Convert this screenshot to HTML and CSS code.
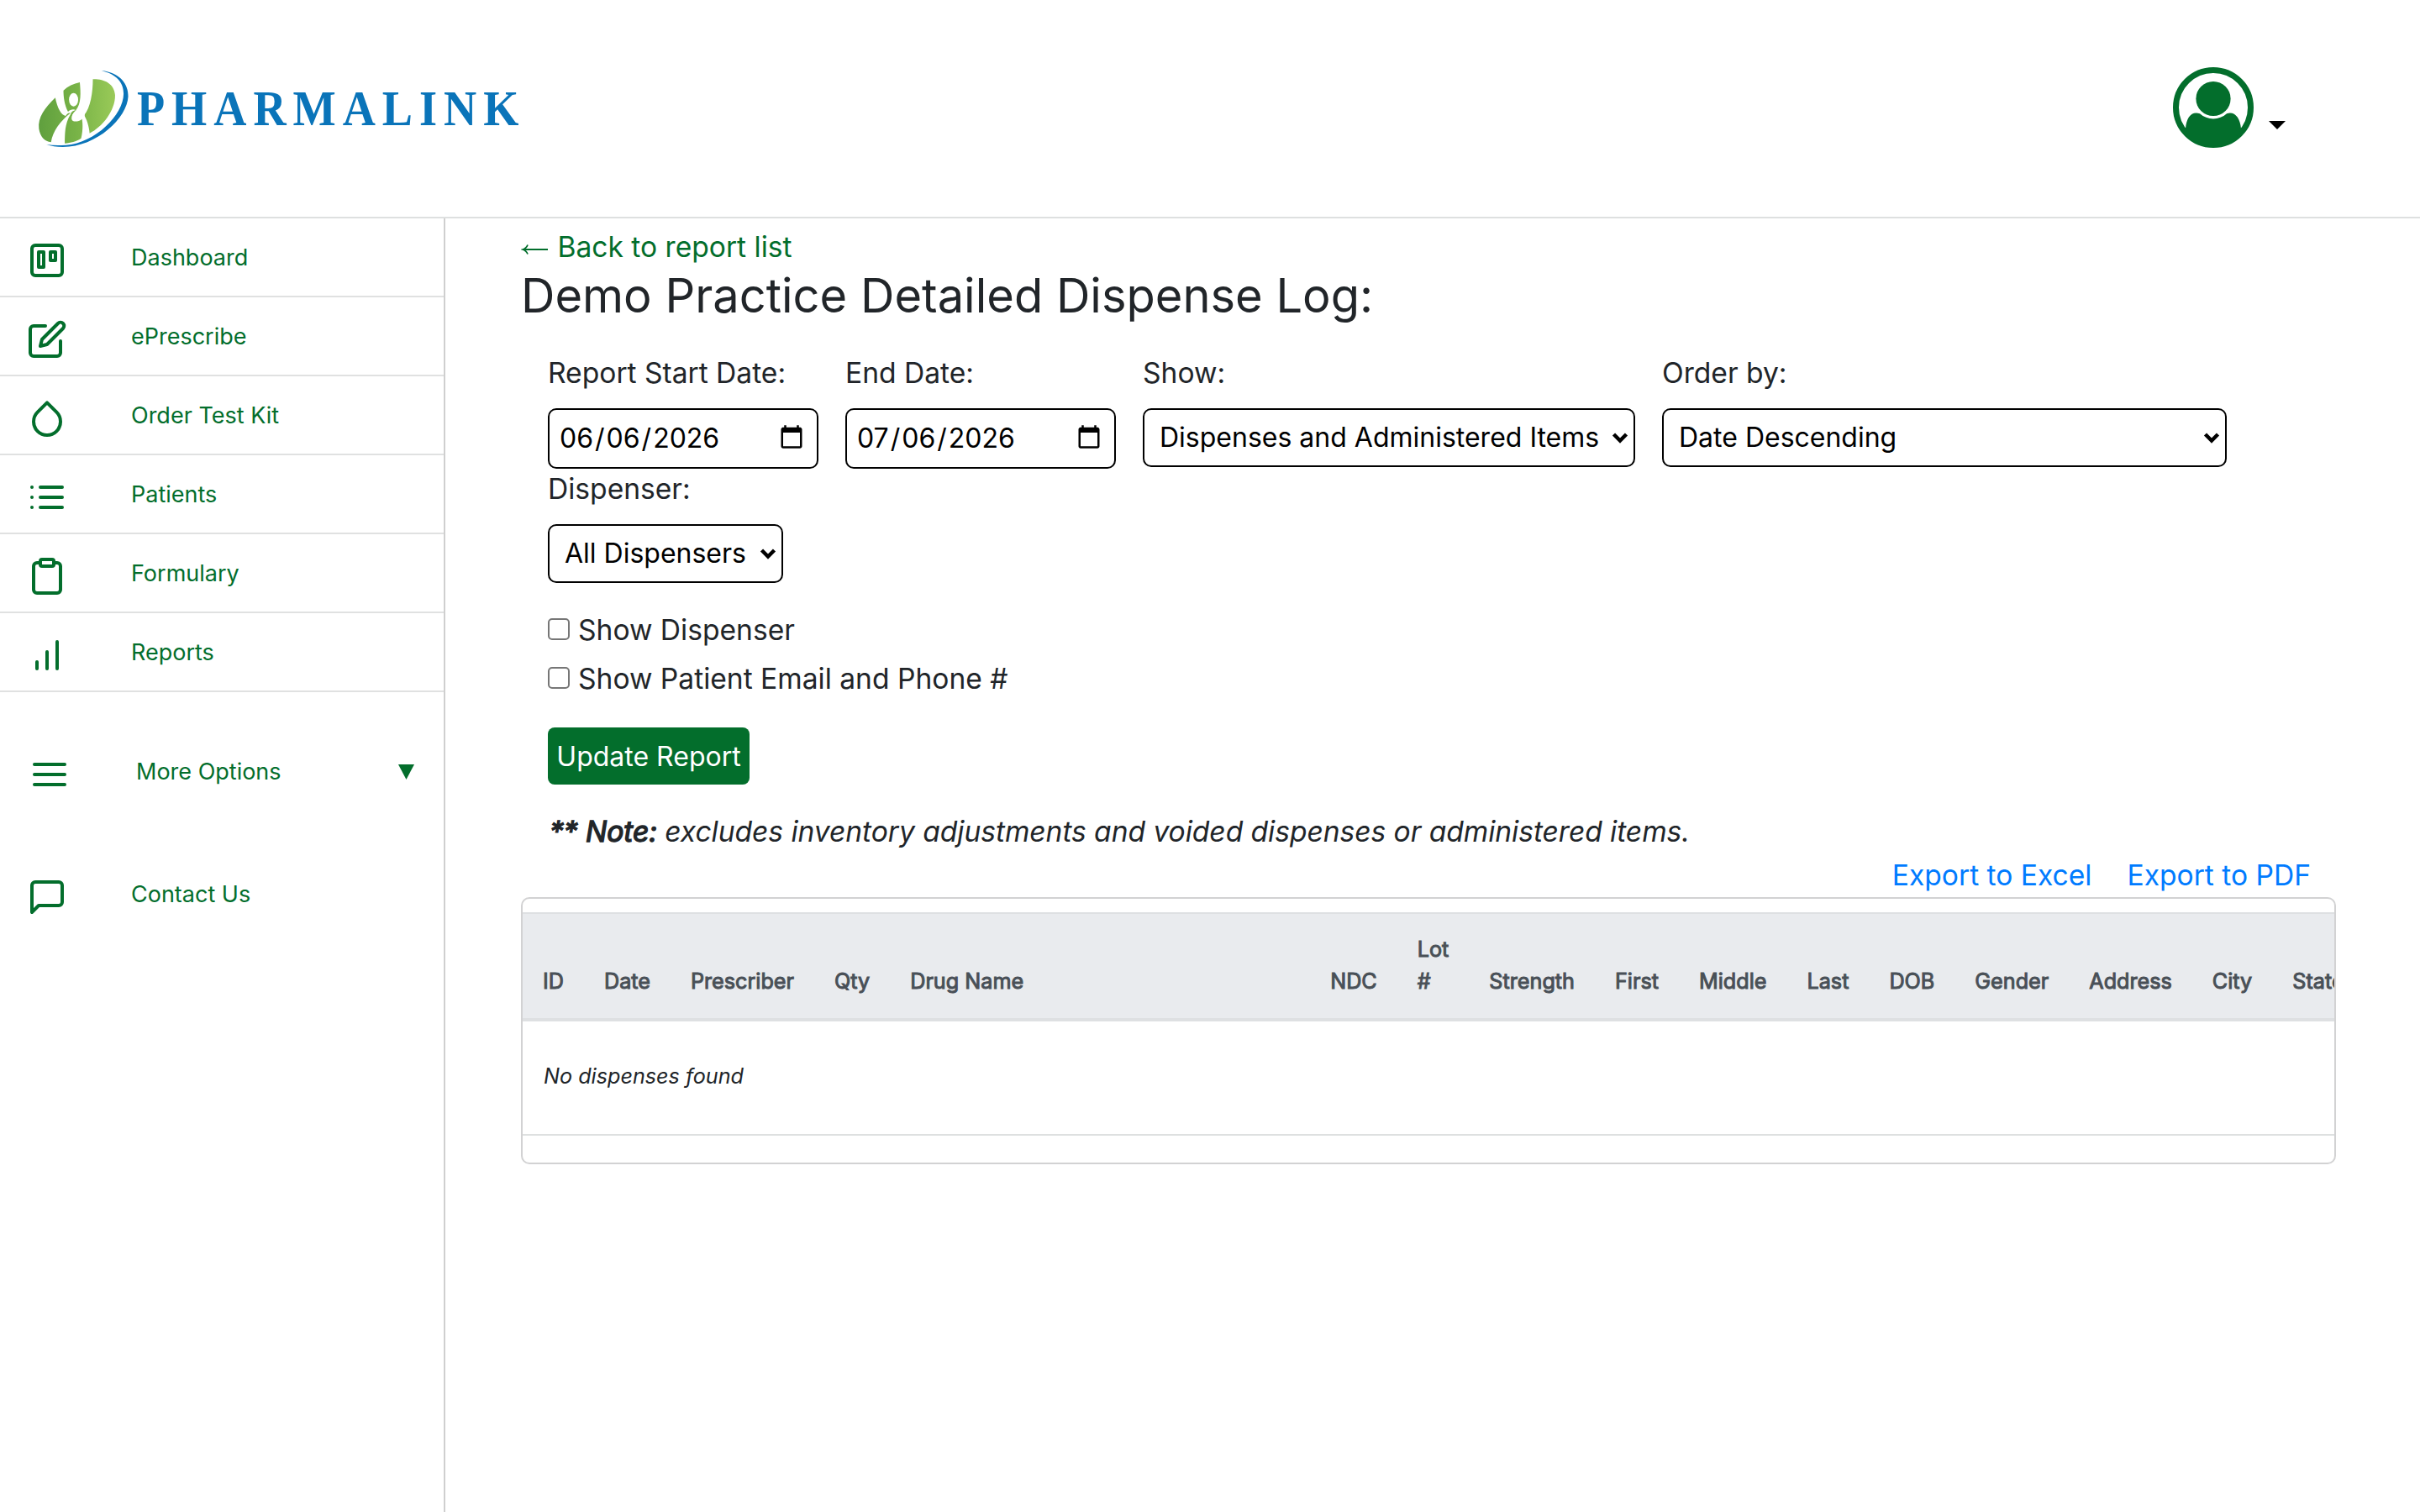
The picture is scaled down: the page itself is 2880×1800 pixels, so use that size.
FILE: index.html
```
<!DOCTYPE html>
<html lang="en-US">
<head>
  <meta charset="UTF-8">
  <title>Detailed Dispense Log</title>
  <link rel="stylesheet" href="styles.css">
</head>
<body>
  <header class="topbar">
    <svg class="logo" viewBox="0 0 610 140" width="610" height="140">
      <defs>
        <linearGradient id="leaf" x1="40" y1="0" x2="275" y2="0" gradientUnits="userSpaceOnUse">
          <stop offset="0" stop-color="#5f9f3e"/>
          <stop offset="0.5" stop-color="#78b347"/>
          <stop offset="1" stop-color="#9aca58"/>
        </linearGradient>
      </defs>
      <g transform="scale(0.389 0.3333)" fill="url(#leaf)">
        <path d="M92 169C60 205 38 240 42 280C46 310 60 325 79 328C84 288 108 252 138 224C132 222 128 226 124 234C110 232 98 205 92 169Z"/>
        <path d="M117 143C130 128 148 119 167 114C170 150 172 190 155 214C147 208 138 212 131 219C120 195 117 165 117 143Z"/>
        <path d="M207 103C242 102 272 118 275 160C276 215 235 275 197 296C195 270 188 245 180 232C200 205 207 150 207 103Z"/>
        <path d="M121 332C122 300 120 262 139 228C140 220 148 214 157 213C146 224 140 236 146 240C152 246 164 232 172 236C176 250 178 284 171 314C155 326 140 330 121 332Z"/>
        <ellipse cx="148" cy="176" rx="14" ry="24" fill="#fff"/>
        <path fill="#fff" d="M146 252C138 245 142 226 158 212C150 228 150 238 158 234C166 228 168 206 169 190L182 190L182 236C174 248 158 258 146 252Z"/>
        <path fill="#0a74b9" d="M233 72C290 80 316 120 315 165C312 240 220 345 115 345C95 345 80 342 65 336C85 340 105 340 125 338C215 330 300 230 301 155C301 115 280 85 233 72Z"/>
      </g>
      <text class="logo-text" transform="translate(133 89) scale(0.920 1)" textLength="494" lengthAdjust="spacing">PHARMALINK</text>
    </svg>
    <div class="account">
      <svg width="96" height="96" viewBox="0 0 96 96">
        <circle cx="48" cy="48" r="44.5" fill="none" stroke="#036e2c" stroke-width="7"/>
        <circle cx="48" cy="37.5" r="20.6" fill="#036e2c"/>
        <path fill="#036e2c" d="M15 73C16 60 22 52 32 55.3C41 63.5 55 63.5 64 55.3C73 52 80 60 81 73C76 86 64 94 48 94C32 94 20 86 15 73Z"/>
      </svg>
      <svg class="caret" width="20" height="10" viewBox="0 0 20 10"><path d="M0 0H20L10 10Z"/></svg>
    </div>
  </header>

  <div class="page">
    <nav class="sidebar">
      <a class="item" href="#">
        <svg class="icon" viewBox="0 0 24 24"><rect x="3" y="3" width="18" height="18" rx="2"/><rect x="7" y="7" width="3" height="9"/><rect x="14" y="7" width="3" height="5"/></svg>
        <span>Dashboard</span>
      </a>
      <a class="item" href="#">
        <svg class="icon" viewBox="0 0 24 24"><path d="M11 4H4a2 2 0 0 0-2 2v14a2 2 0 0 0 2 2h14a2 2 0 0 0 2-2v-7"/><path d="M18.500 2.500a2.121 2.121 0 0 1 3 3L12 15l-4 1 1-4 9.500-9.500z"/></svg>
        <span>ePrescribe</span>
      </a>
      <a class="item" href="#">
        <svg class="icon" viewBox="0 0 24 24"><path d="M12 2.690l5.660 5.660a8 8 0 1 1-11.310 0z"/></svg>
        <span>Order Test Kit</span>
      </a>
      <a class="item" href="#">
        <svg class="icon" viewBox="0 0 24 24"><path d="M8 6h13M8 12h13M8 18h13M3 6h.01M3 12h.01M3 18h.01"/></svg>
        <span>Patients</span>
      </a>
      <a class="item" href="#">
        <svg class="icon" viewBox="0 0 24 24"><path d="M16 4h2a2 2 0 0 1 2 2v14a2 2 0 0 1-2 2H6a2 2 0 0 1-2-2V6a2 2 0 0 1 2-2h2"/><rect x="8" y="2" width="8" height="4" rx="1"/></svg>
        <span>Formulary</span>
      </a>
      <a class="item" href="#">
        <svg class="icon" viewBox="0 0 24 24"><path d="M12 20V10M18 20V4M6 20v-4"/></svg>
        <span>Reports</span>
      </a>
      <a class="item more" href="#">
        <svg class="icon" viewBox="0 0 24 24"><path d="M3 12h18M3 6h18M3 18h18"/></svg>
        <span>More Options</span>
        <svg class="arrow" width="19" height="18" viewBox="0 0 19 18"><path d="M0 0H19L9.500 18Z"/></svg>
      </a>
      <a class="item contact" href="#">
        <svg class="icon" viewBox="0 0 24 24"><path d="M21 15a2 2 0 0 1-2 2H7l-4 4V5a2 2 0 0 1 2-2h14a2 2 0 0 1 2 2z"/></svg>
        <span>Contact Us</span>
      </a>
    </nav>

    <main class="content">
      <a class="back" href="#"><svg class="back-arrow" width="34" height="14" viewBox="0 0 34 14"><path d="M2 7H32M8 1.500Q6.500 5.500 2 7Q6.500 8.500 8 12.500"/></svg> Back to report list</a>
      <h1>Demo Practice Detailed Dispense Log:</h1>

      <form class="filters">
        <div class="field date">
          <label for="start">Report Start Date:</label>
          <input id="start" type="date" value="2026-06-06">
        </div>
        <div class="field date">
          <label for="end">End Date:</label>
          <input id="end" type="date" value="2026-07-06">
        </div>
        <div class="field show">
          <label for="show">Show:</label>
          <div class="select">
            <select id="show"><option>Dispenses and Administered Items</option></select>
            <svg class="chevron" width="20" height="14" viewBox="0 0 20 14"><path d="M2.500 3L10 10.500L17.500 3"/></svg>
          </div>
        </div>
        <div class="field order">
          <label for="order">Order by:</label>
          <div class="select">
            <select id="order"><option>Date Descending</option></select>
            <svg class="chevron" width="20" height="14" viewBox="0 0 20 14"><path d="M2.500 3L10 10.500L17.500 3"/></svg>
          </div>
        </div>
        <div class="field dispenser">
          <label for="dispenser">Dispenser:</label>
          <div class="select">
            <select id="dispenser"><option>All Dispensers</option></select>
            <svg class="chevron" width="20" height="14" viewBox="0 0 20 14"><path d="M2.500 3L10 10.500L17.500 3"/></svg>
          </div>
        </div>
      </form>

      <div class="checks">
        <label><input type="checkbox"><span>Show Dispenser</span></label>
        <label><input type="checkbox"><span>Show Patient Email and Phone #</span></label>
      </div>

      <button class="update" type="button">Update Report</button>

      <p class="note"><b>** Note:</b> excludes inventory adjustments and voided dispenses or administered items.</p>

      <div class="exports">
        <a href="#">Export to Excel</a>
        <a href="#">Export to PDF</a>
      </div>

      <div class="table-box">
        <table>
          <thead>
            <tr>
              <th>ID</th>
              <th>Date</th>
              <th>Prescriber</th>
              <th>Qty</th>
              <th class="drug">Drug Name</th>
              <th>NDC</th>
              <th>Lot<br>#</th>
              <th>Strength</th>
              <th>First</th>
              <th>Middle</th>
              <th>Last</th>
              <th>DOB</th>
              <th>Gender</th>
              <th>Address</th>
              <th>City</th>
              <th>State</th>
            </tr>
          </thead>
          <tbody>
            <tr>
              <td colspan="16">No dispenses found</td>
            </tr>
          </tbody>
        </table>
      </div>
    </main>
  </div>
</body>
</html>
```
FILE: styles.css
```
* {
  box-sizing: border-box;
}

body {
  margin: 0;
  font-family: Inter, sans-serif;
  font-size: 33.6px;
  line-height: 1.5;
  color: #212529;
  background: #fff;
}

a {
  text-decoration: none;
}

.topbar {
  display: flex;
  justify-content: space-between;
  align-items: flex-start;
  height: 260px;
  padding: 60px 160px 0 30px;
  border-bottom: 2px solid #dee0e0;
}

.logo-text {
  font-family: "Liberation Serif", serif;
  font-size: 59px;
  font-weight: bold;
  fill: #0a74b9;
}

.account {
  display: flex;
  align-items: flex-end;
  gap: 18px;
  padding-top: 20px;
}

.caret {
  margin-bottom: 22px;
}

.page {
  display: flex;
  height: 1540px;
}

/* Sidebar */
.sidebar {
  width: 530px;
  border-right: 2px solid #cfcfcf;
}

.item {
  display: flex;
  align-items: flex-start;
  gap: 76px;
  height: 94px;
  padding: 26px 32px 0;
  border-bottom: 2px solid #e0e1e1;
  color: #036e2c;
  font-size: 27px;
}

.item span {
  padding-top: 1px;
}

.icon {
  width: 48px;
  height: 48px;
  fill: none;
  stroke: #036e2c;
  stroke-width: 2;
  stroke-linecap: round;
  stroke-linejoin: round;
}

.more {
  gap: 79px;
  margin-top: 48px;
  padding: 26px 35px 0;
  border: none;
}

.more .arrow {
  margin: 12px 0 0 auto;
  fill: #036e2c;
}

.contact {
  margin-top: 52px;
  border: none;
}

/* Report */
.content {
  width: 2160px;
  margin-left: 90px;
  padding-top: 9px;
}

.back {
  display: block;
  height: 50px;
  color: #036e2c;
}

.back-arrow {
  fill: none;
  stroke: #036e2c;
  stroke-width: 1.8;
  vertical-align: 2px;
}

h1 {
  margin: 0;
  font-size: 56px;
  font-weight: 400;
  line-height: 67px;
}

.filters {
  display: flex;
  flex-wrap: wrap;
  column-gap: 32px;
  padding: 32px 32px 0;
}

.field {
  height: 138px;
}

.field label {
  display: block;
  height: 68px;
  padding-top: 1px;
}

.date {
  width: 322px;
}

.show {
  width: 586px;
}

.order {
  width: 672px;
}

.dispenser {
  width: 280px;
}

.field input,
.field select {
  width: 100%;
  height: 70px;
  border: 2px solid #000;
  border-radius: 10px;
  background: #fff;
  color: #000;
  font-family: inherit;
  font-size: 32px;
}

.field input {
  height: 72px;
  padding: 0 12px 2px 10px;
}

.field input::-webkit-datetime-edit-month-field,
.field input::-webkit-datetime-edit-day-field,
.field input::-webkit-datetime-edit-year-field {
  padding: 0 2px;
}

.field select {
  appearance: none;
  padding: 0 16px 2px 18px;
}

.select {
  position: relative;
}

.chevron {
  position: absolute;
  right: 8px;
  top: 28px;
  fill: none;
  stroke: #000;
  stroke-width: 4.500;
}

.checks {
  padding: 30px 32px 0;
}

.checks label {
  display: flex;
  align-items: center;
  gap: 10px;
  height: 58px;
  padding-bottom: 8px;
}

.checks span {
  padding-top: 2px;
}

.checks input {
  appearance: none;
  width: 26px;
  height: 26px;
  margin: 0;
  border: 2px solid #767676;
  border-radius: 5px;
  background: #fff;
}

.update {
  display: block;
  width: 240px;
  height: 68px;
  margin: 26px 32px 0;
  padding: 0;
  border: none;
  border-radius: 8px;
  background: #036e2c;
  color: #fff;
  font-family: inherit;
  font-size: 32px;
}

.note {
  margin: 31px 34px 0;
  font-style: italic;
  letter-spacing: -0.04px;
}

.note b {
  font-weight: 400;
  -webkit-text-stroke: 1.400px #212529;
}

.exports {
  display: flex;
  justify-content: flex-end;
  gap: 42px;
  height: 52.600px;
  padding: 2px 30px 0 0;
}

.exports a {
  color: #007bff;
}

.table-box {
  height: 318px;
  padding-top: 16px;
  border: 2px solid #d2d2d3;
  border-radius: 10px;
  overflow: hidden;
}

table {
  border-collapse: separate;
  border-spacing: 0;
  font-size: 25.200px;
  line-height: 38px;
  white-space: nowrap;
}

th {
  height: 130px;
  padding: 23px 24px 25px;
  border-top: 2px solid #dee0e2;
  border-bottom: 4px solid #dee0e2;
  background: #e9ebee;
  color: #495057;
  font-weight: 400;
  text-align: left;
  vertical-align: bottom;
  -webkit-text-stroke: 1px #495057;
}

.drug {
  min-width: 500px;
}

td {
  height: 136px;
  padding: 0 25px 4px;
  border-bottom: 2px solid #dee0e0;
  font-style: italic;
}
```
